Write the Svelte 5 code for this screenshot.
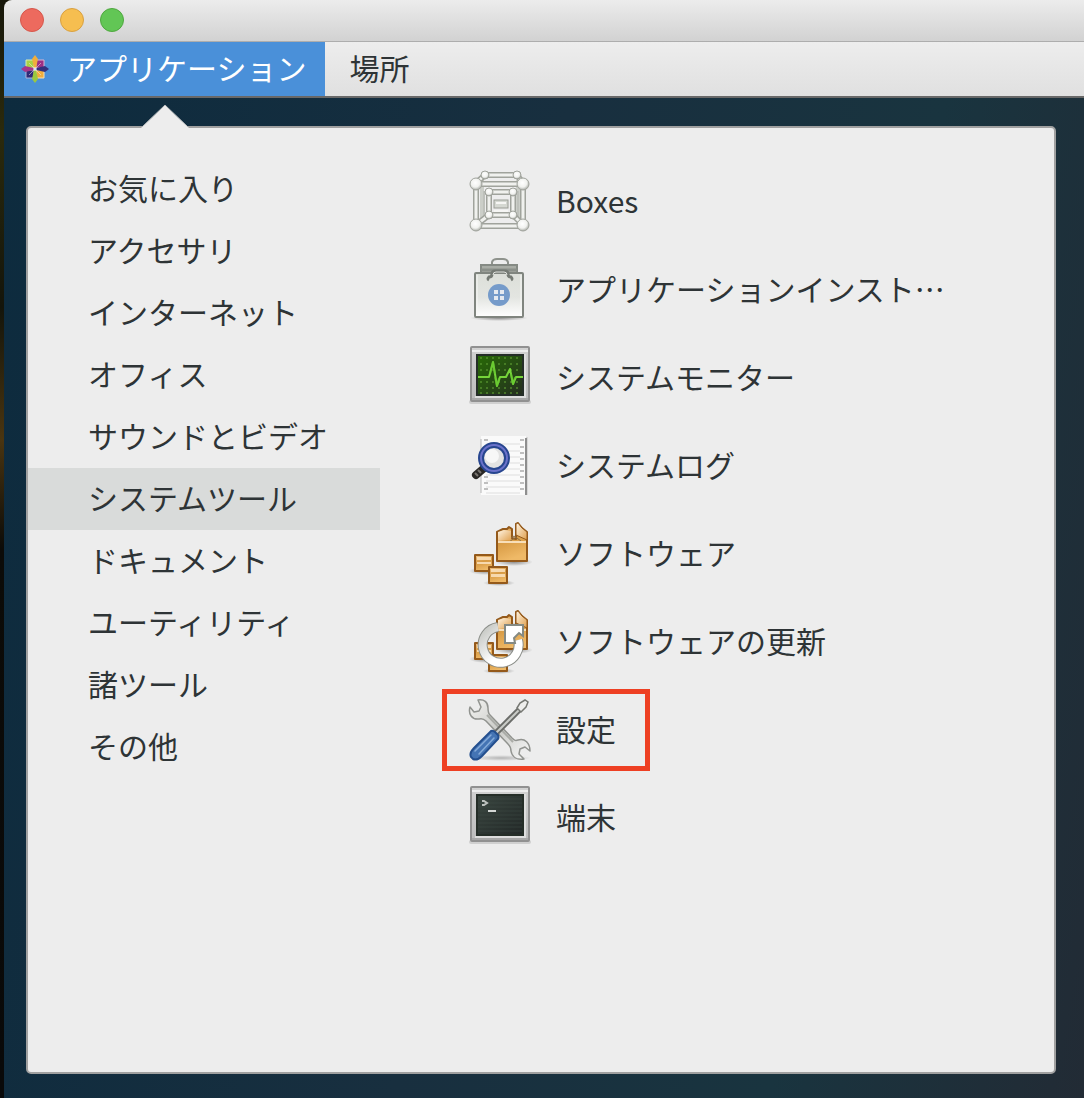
<script>
  let { selected = "システムツール" } = $props();

  let current = $state(selected);

  const categories = [
    "お気に入り",
    "アクセサリ",
    "インターネット",
    "オフィス",
    "サウンドとビデオ",
    "システムツール",
    "ドキュメント",
    "ユーティリティ",
    "諸ツール",
    "その他"
  ];

  // marked = drawn with the red frame
  const apps = [
    { icon: "boxes", label: "Boxes" },
    { icon: "bag", label: "アプリケーションインスト…" },
    { icon: "monitor", label: "システムモニター" },
    { icon: "log", label: "システムログ" },
    { icon: "packages", label: "ソフトウェア" },
    { icon: "update", label: "ソフトウェアの更新" },
    { icon: "tools", label: "設定", marked: true },
    { icon: "terminal", label: "端末" }
  ];

  // ball joints and rods of the Boxes icon
  const rods = [
    [17, 5, 49, 5], [8, 13, 17, 5], [55, 13, 49, 5],
    [21, 45, 8, 55], [45, 45, 55, 55],
    [21, 22, 45, 22], [21, 22, 21, 45], [45, 22, 45, 45], [21, 45, 45, 45],
    [8, 14, 55, 14], [8, 14, 8, 55], [55, 14, 55, 55], [8, 56, 55, 56]
  ];
  const balls = [
    [17, 5, 4], [49, 5, 4], [21, 22, 4], [45, 22, 4], [21, 45, 4], [45, 45, 4],
    [8, 14, 6], [55, 14, 6], [8, 55, 6], [55, 55, 6]
  ];
  const holes = [6, 13, 19, 25, 31, 37, 43, 49, 55];
</script>

<svelte:head>
  <title>アプリケーション</title>
</svelte:head>

<!-- gradients shared by the icons -->
<svg class="defs" aria-hidden="true">
  <defs>
    <radialGradient id="ball" cx=".45" cy=".4" r=".6">
      <stop offset="0" stop-color="#fff" /><stop offset=".6" stop-color="#f1f2ef" /><stop offset="1" stop-color="#a9aca6" />
    </radialGradient>
    <linearGradient id="frame" x2="0" y2="1">
      <stop offset="0" stop-color="#d2d2d2" /><stop offset="1" stop-color="#bcbcbc" />
    </linearGradient>
    <linearGradient id="green" x2="1" y2="1">
      <stop offset="0" stop-color="#286a06" /><stop offset=".5" stop-color="#264d13" /><stop offset="1" stop-color="#252c20" />
    </linearGradient>
    <linearGradient id="dark" x2="1" y2="1">
      <stop offset="0" stop-color="#39453f" /><stop offset="1" stop-color="#222827" />
    </linearGradient>
    <linearGradient id="paperbag" x2="0" y2="1">
      <stop offset="0" stop-color="#dcdfd9" /><stop offset=".55" stop-color="#e3e5e1" /><stop offset="1" stop-color="#fff" />
    </linearGradient>
    <linearGradient id="carton" x2=".3" y2="1">
      <stop offset="0" stop-color="#f1c384" /><stop offset=".5" stop-color="#d79a43" /><stop offset="1" stop-color="#efb967" />
    </linearGradient>
    <linearGradient id="flap" x2="1" y2="1">
      <stop offset="0" stop-color="#fff4e2" /><stop offset="1" stop-color="#e0a04e" />
    </linearGradient>
    <linearGradient id="ring" x2="1" y2="1">
      <stop offset="0" stop-color="#c3c5c1" /><stop offset=".6" stop-color="#fff" />
    </linearGradient>
    <linearGradient id="wrench" x2="1" y2="1">
      <stop offset="0" stop-color="#f4f4f2" /><stop offset=".5" stop-color="#c9cac6" /><stop offset="1" stop-color="#fafafa" />
    </linearGradient>
    <radialGradient id="shade">
      <stop offset="0" stop-color="#000" stop-opacity=".4" /><stop offset="1" stop-color="#000" stop-opacity="0" />
    </radialGradient>
  </defs>
</svg>

{#snippet cartons()}
  <ellipse cx="17" cy="49" rx="16" ry="4" fill="url(#shade)" />
  <ellipse cx="31" cy="61" rx="16" ry="3" fill="url(#shade)" />
  <ellipse cx="46" cy="40" rx="19" ry="4" fill="url(#shade)" />
  <g stroke="#94591a" stroke-width="2" stroke-linejoin="round">
    <path d="M29 39V10l6-3h4l2-2 3 2v9l4 1V2l2-1 4 5 5 4v29z" fill="url(#carton)" />
    <path d="M30 19V10l6-2 7 1v9z" fill="url(#flap)" stroke="none" />
    <path d="M48 13V2l2-1 4 5 5 4v8z" fill="url(#flap)" stroke-width="1" />
    <path d="M43 16l3-2 7 5M41 20l7-5" fill="none" stroke="#8f7046" stroke-width="1" />
    <path d="M30 20h28" stroke="#f8dfb9" />
    <rect x="7" y="33" width="18" height="16" fill="url(#carton)" />
    <rect x="21" y="45" width="18" height="16" fill="url(#carton)" />
  </g>
  <path d="M9 35h14v3H9zM9 40h14v2H9zM23 47h14v3H23zM23 52h14v3H23z" fill="#fbe3bf" opacity=".85" />
{/snippet}

{#snippet screen(fill)}
  <rect x="1" y="54" width="62" height="4" rx="2" fill="#000" opacity=".12" />
  <rect x="3" y="1" width="58" height="54" rx="1" fill="url(#frame)" stroke="#919191" stroke-width="2" />
  <path d="M4 5h56" stroke="#ededed" stroke-width="2" />
  <path d="M4 53h56" stroke="#a8a8a8" stroke-width="2" />
  <path d="M7 51h50V8" fill="none" stroke="#dedede" stroke-width="2" />
  <rect x="9" y="9" width="46" height="40" {fill} stroke="#252e28" stroke-width="2" />
{/snippet}

{#snippet icon(name)}
  <svg class="icon" viewBox="0 0 64 64" aria-hidden="true">
    {#if name === "boxes"}
      <path d="M50 10v42M14 10v42" stroke="#cbcec8" stroke-width="4" />
      <rect x="16" y="22" width="34" height="24" fill="none" stroke="#bec1bb" stroke-width="2" />
      {#each rods as [x1, y1, x2, y2]}
        <line {x1} {y1} {x2} {y2} stroke="#a0a39c" stroke-width="6" />
        <line {x1} {y1} {x2} {y2} stroke="#f0f1ee" stroke-width="3" />
      {/each}
      <rect x="26" y="30" width="14" height="8" fill="#d5d8d2" stroke="#9a9d96" />
      <path d="M28 33h10M26 41h14" stroke="#f6f6f4" stroke-width="2" />
      {#each balls as [cx, cy, r]}
        <circle {cx} {cy} {r} fill="url(#ball)" stroke="#a0a39c" stroke-width="1" />
      {/each}
    {:else if name === "bag"}
      <ellipse cx="31" cy="60" rx="29" ry="3" fill="url(#shade)" />
      <path d="M24 7V4q1-3 5-3h6q4 0 5 3v3" fill="none" stroke="#8f938d" stroke-width="2" />
      <path d="M13 15V7h36v8z" fill="#a8aca5" stroke="#858a84" stroke-width="2" />
      <path d="M13 12h36" stroke="#8b908a" stroke-width="3" />
      <rect x="7" y="15" width="48" height="44" rx="1" fill="url(#paperbag)" stroke="#80857f" stroke-width="2" />
      <path d="M9 57V17M53 57V17" stroke="#f6f7f5" />
      <path d="M21 22q-2-1 0-3 3 0 3-3 0-3 3-3h10q3 0 3 3 0 3 3 3 2 2 0 3" fill="none" stroke="#757a74" stroke-width="3" />
      <path d="M25 17q0-3 3-3h8q3 0 3 3" fill="none" stroke="#dfe1dd" stroke-width="1" />
      <circle cx="31" cy="37" r="11" fill="#759bca" />
      <path d="M26 32h4v4h-4zM32 32h4v4h-4zM26 38h4v4h-4zM32 38h4v4h-4z" fill="#e4e9f0" />
    {:else if name === "monitor"}
      {@render screen("url(#green)")}
      {#each [12, 18, 24, 36, 42, 47] as y}
        <path d="M12 {y}h42" stroke="#5c9a32" stroke-width="2" stroke-dasharray="2 4" opacity=".6" />
      {/each}
      <path d="M10 31h11l4-15 4 24 3-9h6l4-8 3 15 3-7h7" fill="none" stroke="#76d43a" stroke-width="2" stroke-linejoin="round" />
      <path d="M22 28l3-12 2 12M27 31l2 9 2-8M43 28l2 10 2-7" fill="none" stroke="#62c52b" stroke-width="2" opacity=".6" />
    {:else if name === "log"}
      <rect x="14" y="3" width="46" height="58" fill="#000" opacity=".09" />
      <rect x="13" y="2" width="45" height="59" fill="#fafafa" />
      <path d="M58 4v57" stroke="#8e8e8e" stroke-width="2" />
      <path d="M13 5v54" stroke="#b6b6b6" stroke-width="1" />
      {#each holes as y}
        <path d="M18 {y + 4}h34" stroke="#dedede" />
        <path d="M16 {y}h4M52 {y}h4" stroke="#bfbfbf" stroke-width="2" />
      {/each}
      <path d="M15 35l-7 6" stroke="#292725" stroke-width="8" stroke-linecap="round" />
      <path d="M10 36l3 3M7 39l3 3" stroke="#77736e" stroke-width="2" />
      <circle cx="26" cy="24" r="12" fill="#e3e3e3" />
      <circle cx="24" cy="22" r="7" fill="#fff" opacity=".7" />
      <circle cx="26" cy="24" r="13" fill="none" stroke="#27468f" stroke-width="6" />
      <circle cx="26" cy="24" r="13" fill="none" stroke="#6b72ca" stroke-width="2" />
    {:else if name === "packages"}
      {@render cartons()}
    {:else if name === "update"}
      {@render cartons()}
      <path d="M30 17a18 18 0 1 0 20 13" fill="none" stroke="#8a8d88" stroke-width="10" />
      <path d="M30 17a18 18 0 1 0 20 13" fill="none" stroke="url(#ring)" stroke-width="8" />
      <path d="M37 15h18v11l-4-3-5 5 1 5H37z" fill="#fff" stroke="#858a83" stroke-width="2" />
    {:else if name === "tools"}
      <ellipse cx="33" cy="60" rx="30" ry="3" fill="url(#shade)" opacity=".6" />
      <path
        d="M10 2l3 7-2 4-5 1-4-5C0 16 4 22 11 21c3-1 5 0 7 2l22 23c2 2 3 4 3 7 1 6 6 9 13 8l-5-5 1-5 5-2 5 4c0-8-5-13-12-11-3 1-4 0-6-2L22 17c-2-2-2-4-2-7 0-6-4-9-10-8z"
        fill="url(#wrench)" stroke="#91938f" stroke-width="1.5" stroke-linejoin="round" />
      <path d="M19 17l26 27" stroke="#aaaca7" stroke-width="2" />
      <path d="M28 35l24-24" stroke="#6a6c69" stroke-width="6" />
      <path d="M28 35l24-24" stroke="#c9cbc7" stroke-width="2" />
      <path d="M49 10l3-5 5-3 3 2-2 5-5 5z" fill="#eeeeec" stroke="#767873" stroke-width="1.5" />
      <path d="M23 33q2-1 4 1l3 3q1 2 0 4L14 58q-5 5-9 3l-2-2q-2-4 3-9z" fill="#4474b4" stroke="#244f8e" stroke-width="2" />
      <path d="M23 37L7 53M26 40L11 56" stroke="#85abd9" stroke-width="1.5" stroke-linecap="round" />
    {:else}
      {@render screen("url(#dark)")}
      {#each [13, 17, 21, 25, 29, 33, 37, 41, 45] as y}
        <path d="M10 {y}h44" stroke="#43514a" opacity=".45" />
      {/each}
      <path d="M14 15h2l3 2-3 2h-2" fill="none" stroke="#bdc1be" stroke-width="2" />
      <path d="M20 25h8" stroke="#d4d7d5" stroke-width="2" />
    {/if}
  </svg>
{/snippet}

<div class="window">
  <header class="titlebar">
    <button class="light close" aria-label="閉じる"></button>
    <button class="light minimize" aria-label="しまう"></button>
    <button class="light zoom" aria-label="拡大"></button>
  </header>

  <nav class="panel">
    <button class="panel-item active">
      <svg class="logo" viewBox="0 0 28 28" aria-hidden="true">
        <path d="M5 5h8v8H5z" fill="#a9d246" stroke="#dcebae" />
        <path d="M15 5h8v8h-8z" fill="#9c2f84" stroke="#d9b3d0" />
        <path d="M5 15h8v8H5z" fill="#2f2b78" stroke="#b3b2d6" />
        <path d="M15 15h8v8h-8z" fill="#f0ae3d" stroke="#f8dfb2" />
        <path d="M14 0l3 4-2 9h-2l-2-9z" fill="#f0ae3d" />
        <path d="M28 14l-4 3-9-2v-2l9-2z" fill="#34307d" />
        <path d="M0 14l4-3 9 2v2l-9 2z" fill="#a5368b" />
        <path d="M14 28l-3-4 2-9h2l2 9z" fill="#9bc83f" />
        <path d="M8 8l5 5M20 8l-5 5M8 20l5-5M20 20l-5-5" stroke="#f3eef2" stroke-width="1" opacity=".5" />
        <path d="M12 14h4M14 12v4" stroke="#fff" stroke-width="1" />
      </svg>
      <span>アプリケーション</span>
    </button>
    <button class="panel-item"><span>場所</span></button>
  </nav>

  <main class="desktop">
    <section class="menu">
      <svg class="arrow" viewBox="0 0 48 24" aria-hidden="true">
        <path d="M0 24L24 1l24 23z" fill="#ededed" />
        <path d="M1 23L24 1l23 22" fill="none" stroke="#b5b8ba" stroke-width="1" />
      </svg>

      <ul class="categories">
        {#each categories as name}
          <li>
            <button class="category" class:selected={name === current} onclick={() => (current = name)}>{name}</button>
          </li>
        {/each}
      </ul>

      <ul class="apps">
        {#each apps as app}
          <li>
            <button class="app" class:marked={app.marked}>
              {@render icon(app.icon)}
              <span>{app.label}</span>
            </button>
          </li>
        {/each}
      </ul>
    </section>
  </main>
</div>

<style>
  :global(body) {
    margin: 0;
    background: linear-gradient(#17170a, #2b2a0c 12%, #14150b 28%, #4a3510 40%, #0c0b08 50%, #090909);
  }

  button { font: inherit; color: inherit; border: 0; margin: 0; padding: 0; background: none; text-align: left; white-space: nowrap; }
  ul { list-style: none; margin: 0; padding: 0; }

  .defs { position: absolute; width: 0; height: 0; }

  .window {
    box-sizing: border-box;
    min-height: 100vh;
    margin-left: 4px;
    display: flex;
    flex-direction: column;
    border-top-left-radius: 8px;
    overflow: hidden;
    color: #2e3436;
    font-family: "Noto Sans CJK JP", sans-serif;
    font-size: 30px;
    font-weight: 400;
    line-height: 40px;
  }

  .titlebar {
    box-sizing: border-box;
    display: flex;
    align-items: center;
    gap: 16px;
    height: 42px;
    padding: 0 0 2px 16px;
    background: linear-gradient(#ececec, #d2d2d2);
    border-bottom: 1px solid #adadad;
  }
  .light { box-sizing: border-box; width: 24px; height: 24px; border-radius: 50%; border: 1px solid; }
  .close { background: #ed6a5e; border-color: #d5574c; }
  .minimize { background: #f6be50; border-color: #d8a040; }
  .zoom { background: #62c655; border-color: #4fa73f; }

  .panel { display: flex; height: 54px; background: linear-gradient(#ededed, #e0e0e0); border-bottom: 2px solid #686868; }
  .panel-item { display: flex; align-items: center; gap: 18px; padding: 0 24px; }
  .panel-item.active { background: #4a90d9; color: #fff; padding: 0 19px 0 17px; }
  .logo { width: 28px; height: 28px; }

  .desktop {
    flex: 1;
    display: flex;
    padding: 28px 28px 24px 22px;
    background: linear-gradient(100deg, #0d2b3e, #182f3f 45%, #19343f 75%, #222b35);
  }

  .menu {
    position: relative;
    flex: 1;
    display: flex;
    padding-top: 30px;
    border: 2px solid #a0a0a0;
    border-radius: 5px;
    background: #ededed;
  }
  .arrow { position: absolute; left: 113px; top: -24px; width: 48px; height: 24px; }

  .categories { width: 352px; }
  .category { display: block; width: 100%; height: 62px; padding: 0 0 4px 60px; }
  .category.selected { background: #d9dbda; }

  .apps { padding-left: 62px; }
  .app { position: relative; display: flex; align-items: center; gap: 24px; height: 88px; padding: 0 34px 0 26px; }
  .app span, .panel-item span { padding-bottom: 4px; }
  .marked::after { content: ""; position: absolute; inset: 3px 0; border: 5px solid #ee4023; }
  .icon { width: 64px; height: 64px; flex: none; }
</style>
